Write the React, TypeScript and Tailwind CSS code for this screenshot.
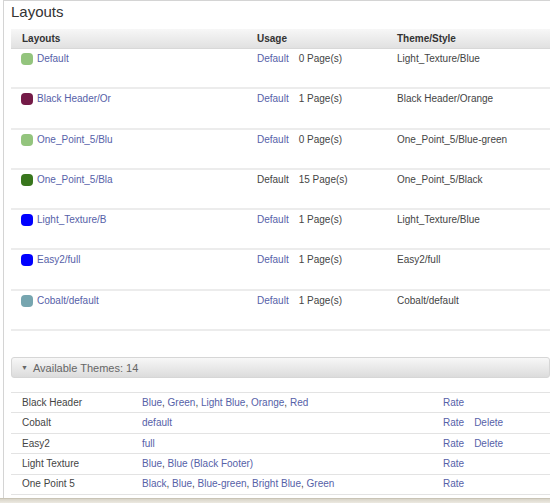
const layouts = [
  { name: 'Default', color: '#93c47d', link: true, pages: '0 Page(s)', theme: 'Light_Texture/Blue' },
  { name: 'Black Header/Or', color: '#741b47', link: true, pages: '1 Page(s)', theme: 'Black Header/Orange' },
  { name: 'One_Point_5/Blu', color: '#93c47d', link: true, pages: '0 Page(s)', theme: 'One_Point_5/Blue-green' },
  { name: 'One_Point_5/Bla', color: '#38761d', link: false, pages: '15 Page(s)', theme: 'One_Point_5/Black' },
  { name: 'Light_Texture/B', color: '#0000ff', link: true, pages: '1 Page(s)', theme: 'Light_Texture/Blue' },
  { name: 'Easy2/full', color: '#0000ff', link: true, pages: '1 Page(s)', theme: 'Easy2/full' },
  { name: 'Cobalt/default', color: '#76a5af', link: true, pages: '1 Page(s)', theme: 'Cobalt/default' },
];

const themes = [
  { name: 'Black Header', styles: ['Blue', 'Green', 'Light Blue', 'Orange', 'Red'], del: false },
  { name: 'Cobalt', styles: ['default'], del: true },
  { name: 'Easy2', styles: ['full'], del: true },
  { name: 'Light Texture', styles: ['Blue', 'Blue (Black Footer)'], del: false },
  { name: 'One Point 5', styles: ['Black', 'Blue', 'Blue-green', 'Bright Blue', 'Green'], del: false },
];

const link = 'text-[#5661a8]';

export default function App() {
  return (
    <div className="w-[550px] h-[503px] overflow-hidden bg-white flex flex-col text-[10px] leading-[12px] text-[#444]" style={{ fontFamily: '"Liberation Sans", Arial, sans-serif' }}>
      <div className="flex-1 ml-[3px] border-l border-t border-[#d4d4d4] pl-[7px] pt-[1px]">
        <h1 className="text-[15px] leading-[19px] text-[#333] mb-[8px]">Layouts</h1>

        <div className="grid grid-cols-[246px_140px_1fr] h-[20px] items-center font-bold text-[#333] bg-gradient-to-b from-[#f7f7f7] to-[#e1e1e1] border-b border-[#d8d8d8]">
          <div className="pl-[11px]">Layouts</div>
          <div>Usage</div>
          <div>Theme/Style</div>
        </div>

        {layouts.map((l) => (
          <div key={l.name} className="grid grid-cols-[246px_140px_1fr] h-[40.3px] pt-[4px] border-b-2 border-[#ececec]">
            <div className="pl-[10px] flex items-start gap-[4px]">
              <span className="w-[12px] h-[12px] rounded-[4px] shrink-0" style={{ backgroundColor: l.color }} />
              <span className={link}>{l.name}</span>
            </div>
            <div className="flex gap-[10px]">
              <span className={l.link ? link : ''}>Default</span>
              <span>{l.pages}</span>
            </div>
            <div>{l.theme}</div>
          </div>
        ))}

        <div className="mt-[26px] h-[21px] flex items-center pl-[9px] rounded-[3px] border border-[#d6d6d6] bg-gradient-to-b from-[#f7f7f7] to-[#dcdcdc] text-[#666] text-[11px]">
          <span className="text-[7px] mr-[5px]">▼</span>
          <span>Available Themes: 14</span>
        </div>

        <div className="mt-[14px] border-t border-[#e3e3e3]">
          {themes.map((t) => (
            <div key={t.name} className="grid grid-cols-[131px_301px_1fr] h-[20.4px] items-center border-b border-[#e3e3e3]">
              <div className="pl-[11px]">{t.name}</div>
              <div>
                {t.styles.map((s, i) => (
                  <span key={s}>
                    <span className={link}>{s}</span>
                    {i < t.styles.length - 1 ? ', ' : ''}
                  </span>
                ))}
              </div>
              <div className="flex gap-[10px]">
                <span className={link}>Rate</span>
                {t.del && <span className={link}>Delete</span>}
              </div>
            </div>
          ))}
        </div>
      </div>
      <div className="h-[5px] bg-gradient-to-b from-[#d9d5c9] to-[#ece9e1] border-t border-[#c9c4b6]" />
    </div>
  );
}
